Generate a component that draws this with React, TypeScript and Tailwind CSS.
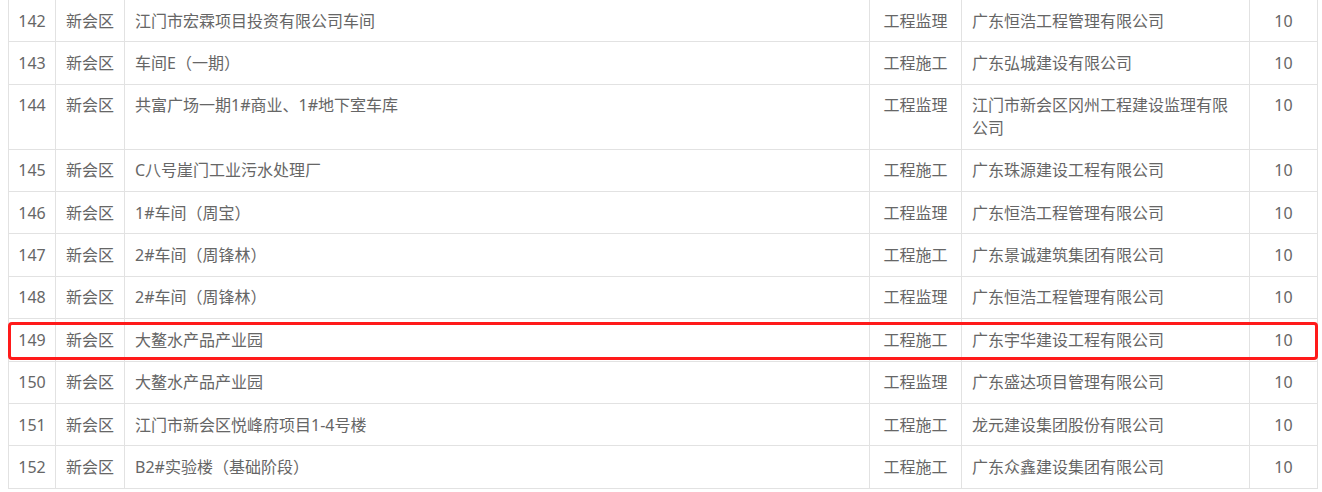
import React from "react";

type Row = { no: number; area: string; name: string; type: string; company: string; score: number; hl?: boolean };

const rows: Row[] = [
  { no: 142, area: "新会区", name: "江门市宏霖项目投资有限公司车间", type: "工程监理", company: "广东恒浩工程管理有限公司", score: 10 },
  { no: 143, area: "新会区", name: "车间E（一期）", type: "工程施工", company: "广东弘城建设有限公司", score: 10 },
  { no: 144, area: "新会区", name: "共富广场一期1#商业、1#地下室车库", type: "工程监理", company: "江门市新会区冈州工程建设监理有限公司", score: 10 },
  { no: 145, area: "新会区", name: "C八号崖门工业污水处理厂", type: "工程施工", company: "广东珠源建设工程有限公司", score: 10 },
  { no: 146, area: "新会区", name: "1#车间（周宝）", type: "工程监理", company: "广东恒浩工程管理有限公司", score: 10 },
  { no: 147, area: "新会区", name: "2#车间（周锋林）", type: "工程施工", company: "广东景诚建筑集团有限公司", score: 10 },
  { no: 148, area: "新会区", name: "2#车间（周锋林）", type: "工程监理", company: "广东恒浩工程管理有限公司", score: 10 },
  { no: 149, area: "新会区", name: "大鳌水产品产业园", type: "工程施工", company: "广东宇华建设工程有限公司", score: 10, hl: true },
  { no: 150, area: "新会区", name: "大鳌水产品产业园", type: "工程监理", company: "广东盛达项目管理有限公司", score: 10 },
  { no: 151, area: "新会区", name: "江门市新会区悦峰府项目1-4号楼", type: "工程施工", company: "龙元建设集团股份有限公司", score: 10 },
  { no: 152, area: "新会区", name: "B2#实验楼（基础阶段）", type: "工程施工", company: "广东众鑫建设集团有限公司", score: 10 },
];

export default function App() {
  return (
    <div
      className="w-[1322px] h-[492px] overflow-hidden bg-white pl-[8px]"
      style={{ fontFamily: '"Noto Sans", "Noto Sans CJK SC", sans-serif' }}
    >
      <div className="w-[1310px] border-l border-r border-[#e2e2e2] text-[16px] leading-[22.4px] text-[#666666]">
        {rows.map((r) => (
          <div key={r.no} className="relative flex border-b border-[#e2e2e2]">
            <div className="w-[47px] shrink-0 border-r border-[#e2e2e2] py-[9.5px] text-center">{r.no}</div>
            <div className="w-[69px] shrink-0 border-r border-[#e2e2e2] py-[9.5px] text-center">{r.area}</div>
            <div className="w-[745px] shrink-0 border-r border-[#e2e2e2] py-[9.5px] pl-[10px] pr-[10px]">{r.name}</div>
            <div className="w-[92px] shrink-0 border-r border-[#e2e2e2] py-[9.5px] text-center">{r.type}</div>
            <div className="w-[288px] shrink-0 border-r border-[#e2e2e2] py-[9.5px] px-[10px]">{r.company}</div>
            <div className="w-[67px] shrink-0 py-[9.5px] text-center">{r.score}</div>
            {r.hl && (
              <div className="pointer-events-none absolute left-[-1px] right-[-1px] top-[3px] bottom-[1px] rounded-[4px] border-[3px] border-[#ff1a1a]" />
            )}
          </div>
        ))}
      </div>
    </div>
  );
}
